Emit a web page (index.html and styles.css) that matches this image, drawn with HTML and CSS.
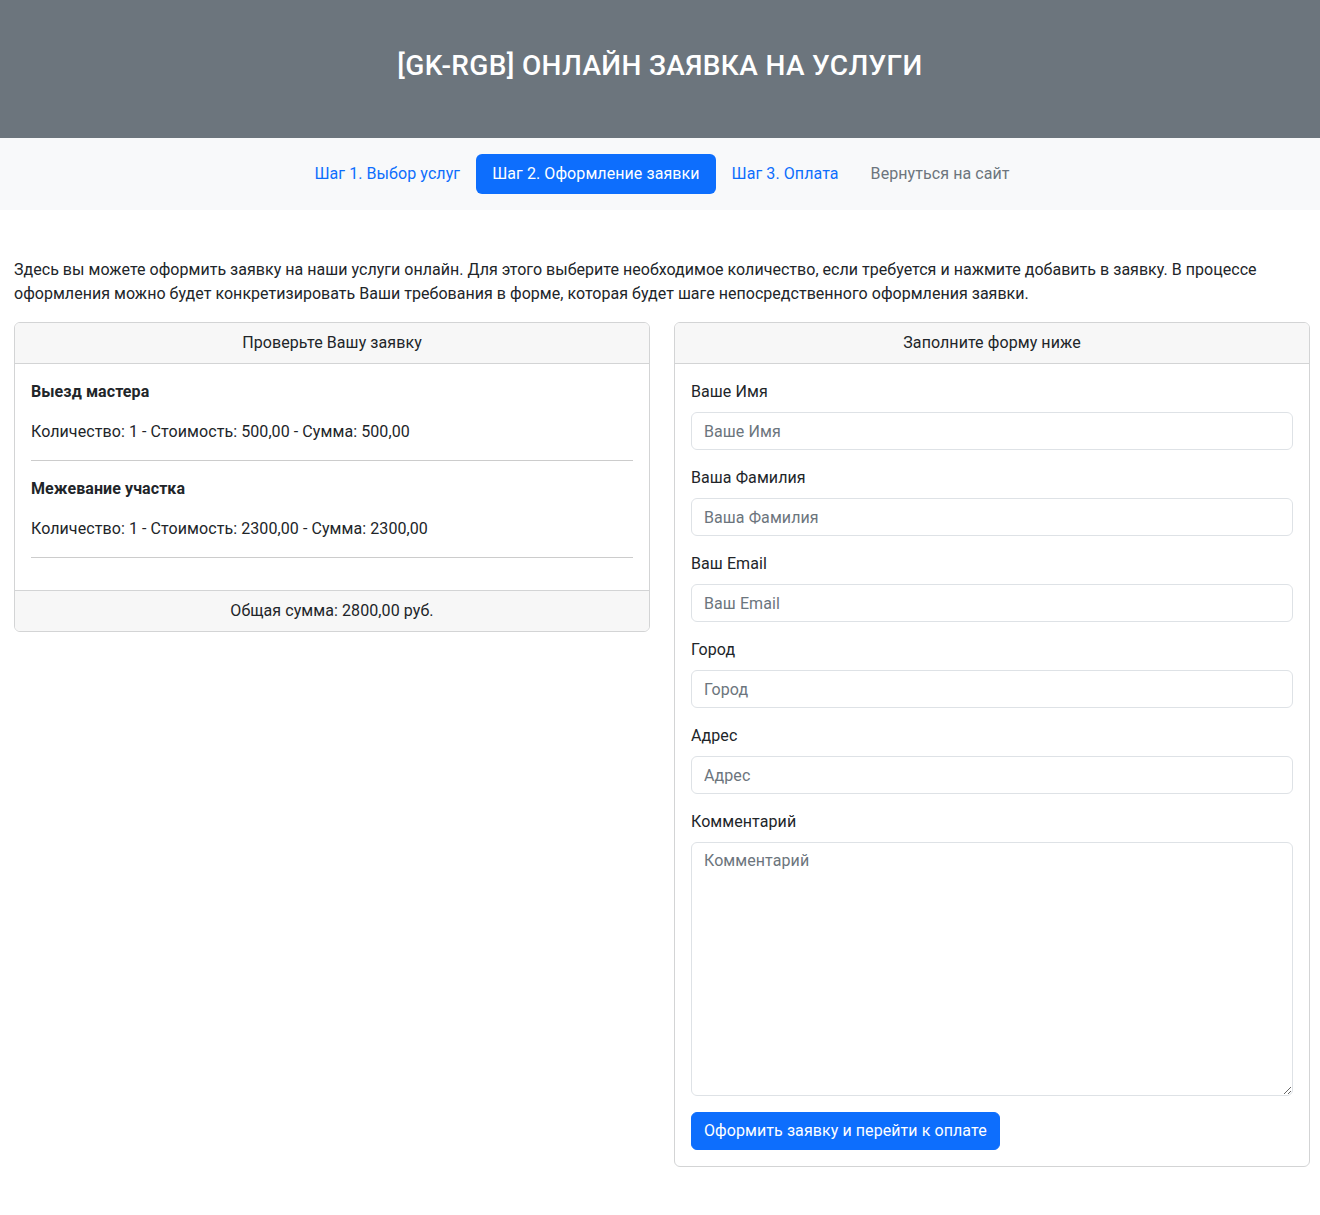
FILE: index.html
```html
<!DOCTYPE html>
<html lang="ru">
<head>
<meta charset="utf-8">
<title>[GK-RGB] Онлайн заявка на услуги</title>
<link rel="stylesheet" href="styles.css">
</head>
<body>
<header class="hero">
  <h1 class="hero-title">[GK-RGB] ОНЛАЙН ЗАЯВКА НА УСЛУГИ</h1>
</header>
<nav class="steps">
  <a class="step" href="#">Шаг 1. Выбор услуг</a>
  <a class="step active" href="#">Шаг 2. Оформление заявки</a>
  <a class="step" href="#">Шаг 3. Оплата</a>
  <a class="step muted" href="#">Вернуться на сайт</a>
</nav>
<main class="content">
  <p class="intro">Здесь вы можете оформить заявку на наши услуги онлайн. Для этого выберите необходимое количество, если требуется и нажмите добавить в заявку. В процессе оформления можно будет конкретизировать Ваши требования в форме, которая будет шаге непосредственного оформления заявки.</p>
  <div class="columns">
    <section class="card">
      <div class="card-header">Проверьте Вашу заявку</div>
      <div class="card-body">
        <div class="item">
          <p class="item-title">Выезд мастера</p>
          <p class="item-line">Количество: 1 - Стоимость: 500,00 - Сумма: 500,00</p>
          <hr class="sep">
        </div>
        <div class="item">
          <p class="item-title">Межевание участка</p>
          <p class="item-line">Количество: 1 - Стоимость: 2300,00 - Сумма: 2300,00</p>
          <hr class="sep">
        </div>
      </div>
      <div class="card-footer">Общая сумма: 2800,00 руб.</div>
    </section>
    <section class="card card-form">
      <div class="card-header">Заполните форму ниже</div>
      <form class="card-body form">
        <div class="field">
          <label class="label" for="f1">Ваше Имя</label>
          <input class="input" id="f1" type="text" placeholder="Ваше Имя">
        </div>
        <div class="field">
          <label class="label" for="f2">Ваша Фамилия</label>
          <input class="input" id="f2" type="text" placeholder="Ваша Фамилия">
        </div>
        <div class="field">
          <label class="label" for="f3">Ваш Email</label>
          <input class="input" id="f3" type="email" placeholder="Ваш Email">
        </div>
        <div class="field">
          <label class="label" for="f4">Город</label>
          <input class="input" id="f4" type="text" placeholder="Город">
        </div>
        <div class="field">
          <label class="label" for="f5">Адрес</label>
          <input class="input" id="f5" type="text" placeholder="Адрес">
        </div>
        <div class="field">
          <label class="label" for="f6">Комментарий</label>
          <textarea class="input textarea" id="f6" placeholder="Комментарий"></textarea>
        </div>
        <div class="actions">
          <button class="btn" type="button">Оформить заявку и перейти к оплате</button>
        </div>
      </form>
    </section>
  </div>
</main>
</body>
</html>
```
FILE: styles.css
```css
* { box-sizing: border-box; }
html, body { margin: 0; padding: 0; }
body {
  font-family: Roboto, "Liberation Sans", sans-serif;
  font-size: 16px;
  line-height: 24px;
  letter-spacing: 0.08px;
  color: #212529;
  background: #fff;
}
.hero {
  background: #6c757d;
  height: 138px;
  display: flex;
  align-items: center;
  justify-content: center;
  padding-bottom: 6px;
}
.hero-title {
  margin: 0;
  color: #fff;
  font-size: 28px;
  font-weight: 500;
  line-height: 34px;
  letter-spacing: 0.35px;
}
.steps {
  background: #f8f9fa;
  height: 72px;
  display: flex;
  align-items: center;
  justify-content: center;
  padding-left: 4px;
}
.step {
  display: block;
  padding: 8px 16px;
  color: #0d6efd;
  text-decoration: none;
  border-radius: 6px;
}
.step.active { background: #0d6efd; color: #fff; }
.step.muted { color: #6c757d; }
.content { padding: 48px 10px 0 14px; }
.intro { margin: 0 0 16px; letter-spacing: 0.03px; }
.columns {
  display: grid;
  grid-template-columns: 1fr 1fr;
  gap: 24px;
  align-items: start;
}
.card {
  border: 1px solid #d3d4d5;
  border-radius: 6px;
  background: #fff;
  overflow: hidden;
}
.card-header {
  background: #f7f7f7;
  border-bottom: 1px solid #d3d4d5;
  padding: 8px 16px;
  text-align: center;
}
.card-footer {
  background: #f7f7f7;
  border-top: 1px solid #d3d4d5;
  padding: 8px 16px;
  text-align: center;
}
.card-body { padding: 16px; }
.item-title { margin: 0 0 16px; font-weight: 700; }
.item-line { margin: 0 0 16px; }
.sep { margin: 0 0 16px; border: 0; border-top: 1px solid #ccc; }
.field { margin-bottom: 16px; }
.label { display: block; margin-bottom: 8px; }
.input {
  display: block;
  width: 100%;
  height: 38px;
  padding: 6px 12px;
  font: inherit;
  letter-spacing: inherit;
  color: #212529;
  border: 1px solid #dee2e6;
  border-radius: 6px;
  background: #fff;
}
.input::placeholder { color: #6c757d; }
.textarea { height: 254px; resize: vertical; }
.btn {
  font: inherit;
  letter-spacing: inherit;
  color: #fff;
  background: #0d6efd;
  border: 1px solid #0d6efd;
  border-radius: 6px;
  padding: 6px 12px;
  height: 38px;
}
```
